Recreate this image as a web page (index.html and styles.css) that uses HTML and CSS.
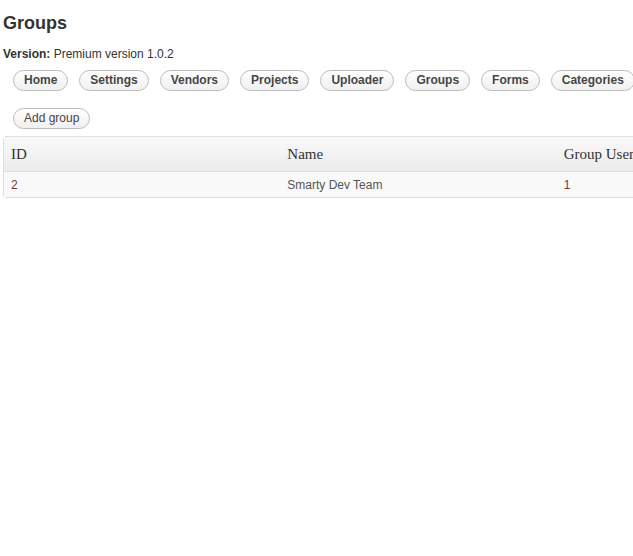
FILE: index.html
```html
<!DOCTYPE html>
<html>
<head>
<meta charset="utf-8">
<link rel="stylesheet" href="styles.css">
</head>
<body>
<div class="wrap">
  <h2 class="title">Groups</h2>
  <p class="version"><strong>Version:</strong> Premium version 1.0.2</p>
  <div class="nav">
    <a class="btn bold">Home</a>
    <a class="btn bold">Settings</a>
    <a class="btn bold">Vendors</a>
    <a class="btn bold">Projects</a>
    <a class="btn bold">Uploader</a>
    <a class="btn bold">Groups</a>
    <a class="btn bold">Forms</a>
    <a class="btn bold">Categories</a>
  </div>
  <div class="actions">
    <a class="btn">Add group</a>
  </div>
  <table class="grid">
    <thead>
      <tr><th>ID</th><th>Name</th><th>Group Users</th></tr>
    </thead>
    <tbody>
      <tr><td class="num">2</td><td>Smarty Dev Team</td><td class="num">1</td></tr>
    </tbody>
  </table>
</div>
</body>
</html>
```
FILE: styles.css
```css
html, body {
  margin: 0;
  padding: 0;
  background: #fff;
  overflow: hidden;
}
body {
  font-family: "Liberation Sans", Arial, sans-serif;
  font-size: 12px;
  color: #333;
}
.wrap {
  padding: 0 0 0 3px;
  width: 900px;
}
.title {
  margin: 0;
  padding: 13px 0 0;
  font-size: 18px;
  line-height: 20px;
  font-weight: bold;
  color: #333;
}
.version {
  margin: 14px 0 0;
  font-size: 12px;
  line-height: 15px;
  color: #333;
}
.nav {
  display: flex;
  gap: 11px;
  margin: 8px 0 0 10px;
}
.actions {
  display: flex;
  margin: 17px 0 0 10px;
}
.btn {
  display: inline-block;
  box-sizing: border-box;
  height: 21px;
  line-height: 19px;
  padding: 0 10px;
  border: 1px solid #bbb;
  border-radius: 11px;
  background: linear-gradient(#fefefe, #f0f0f0);
  color: #464646;
  font-size: 12px;
  text-decoration: none;
  white-space: nowrap;
}
.btn.bold {
  font-weight: bold;
}
.grid {
  margin-top: 7px;
  width: 831px;
  border-collapse: separate;
  border-spacing: 0;
  border: 1px solid #dfdfdf;
  border-radius: 3px;
  table-layout: fixed;
}
.grid th {
  text-align: left;
  font-family: "Liberation Serif", Georgia, serif;
  font-weight: normal;
  font-size: 15px;
  color: #333;
  height: 34px;
  padding: 0 7px;
  background: linear-gradient(#f9f9f9, #ececec);
  border-bottom: 1px solid #dfdfdf;
}
.grid td {
  height: 25px;
  padding: 0 7px;
  background: #f9f9f9;
  color: #555;
  font-size: 12px;
}
.grid td.num {
  color: #7a3535;
}
```
